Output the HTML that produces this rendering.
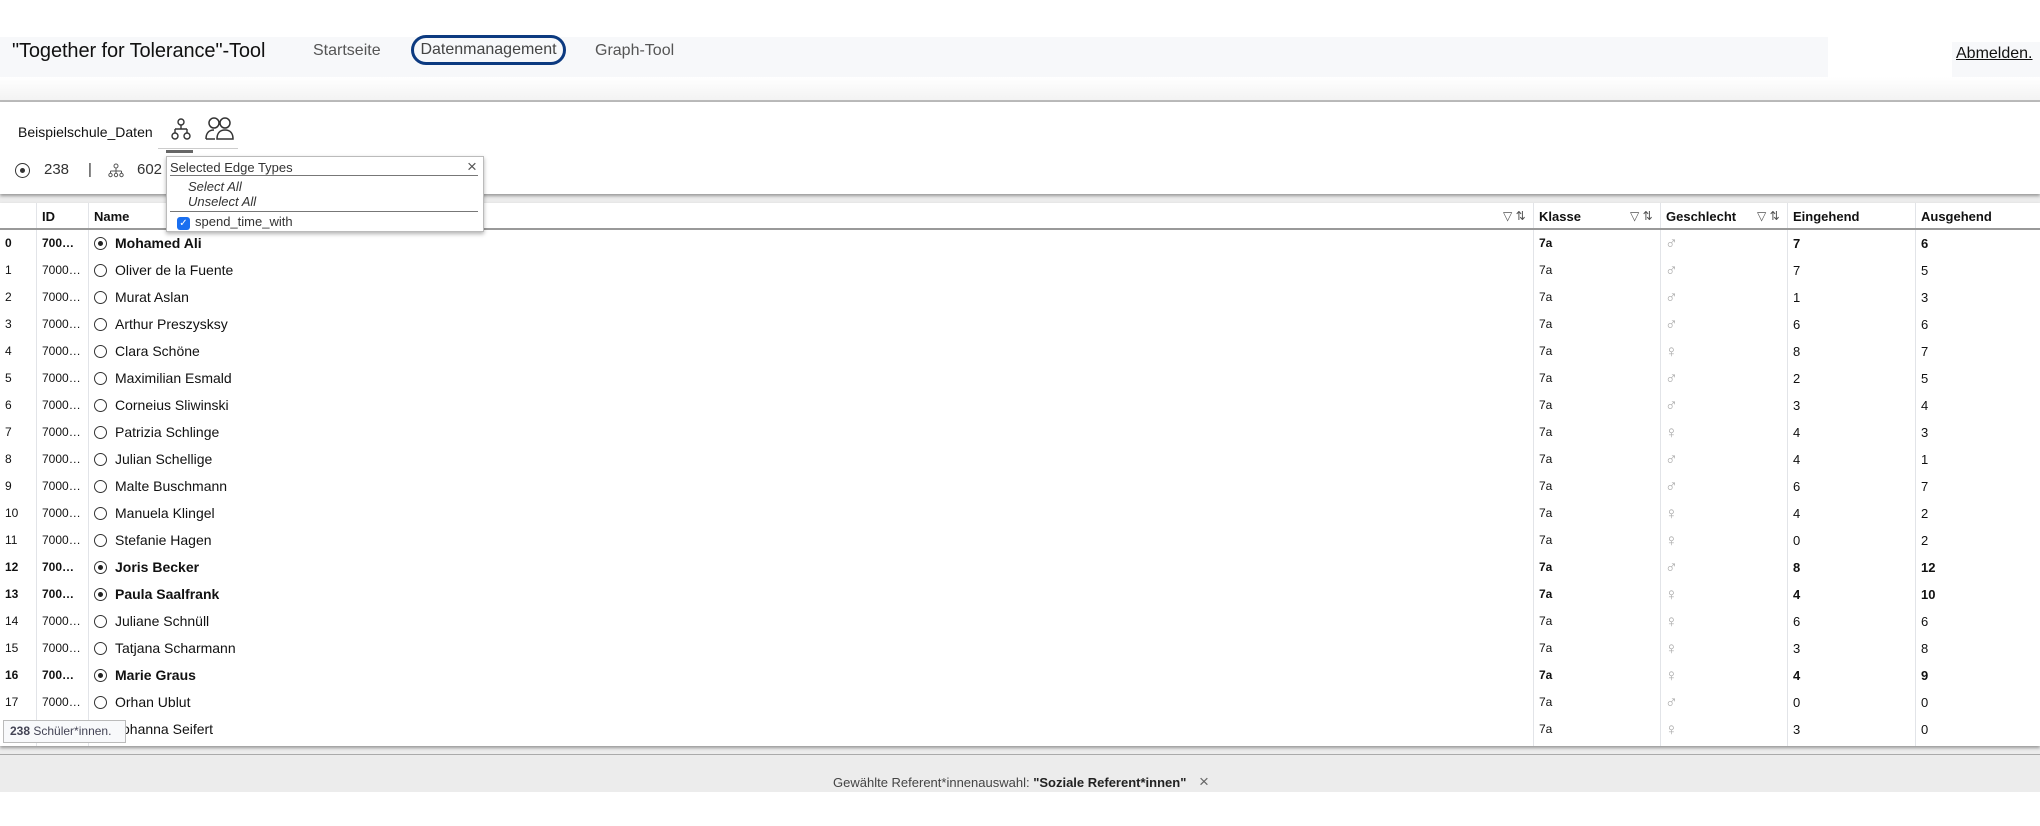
<!DOCTYPE html>
<html><head><meta charset="utf-8"><style>
*{margin:0;padding:0;box-sizing:border-box}
body{width:2040px;height:826px;overflow:hidden;background:#fff;font-family:"Liberation Sans",Arial,sans-serif;color:#111;position:relative}
.a{position:absolute;white-space:nowrap}
#nav{left:0;top:37px;width:1828px;height:40px;background:#f7f8fa}
#panel{left:0;top:100px;width:2040px;height:692px;background:#ececec;border-top:2px solid #bbb}
#card{left:0;top:102px;width:2040px;height:92px;background:#fff;box-shadow:0 2px 3px #999}
#tbl{left:0;top:203px;width:2040px;height:543px;background:#fff;box-shadow:0 2px 3px #999;overflow:hidden}
.row{position:absolute;left:0;width:2040px;height:27px;font-size:14px}
.row span{position:absolute;top:0;line-height:27px}
.vl{position:absolute;top:0;width:1px;height:543px;background:#e2e4e8}
.b{font-weight:bold}
.g{color:#aaa;font-size:17px}
.rad{position:absolute;top:7px;width:13px;height:13px;border:1.2px solid #333;border-radius:50%}
.rad.on::after{content:"";position:absolute;left:3px;top:3px;width:5px;height:5px;background:#222;border-radius:50%}
.ic{color:#555;font-weight:normal;font-size:12px}
</style></head><body>
<div class="a" id="nav"></div>
<div class="a" style="left:12px;top:38px;font-size:20px;line-height:26px;color:#111;letter-spacing:-0.1px">"Together for Tolerance"-Tool</div>
<div class="a" style="left:313px;top:41px;font-size:16px;line-height:20px;color:#555">Startseite</div>
<div class="a" style="left:411px;top:35px;width:155px;height:30px;border:3px solid #0c3a80;border-radius:15px;font-size:16px;line-height:24px;color:#444;text-align:center">Datenmanagement</div>
<div class="a" style="left:595px;top:41px;font-size:16px;line-height:20px;color:#555">Graph-Tool</div>
<div class="a" style="left:1952px;top:42px;width:88px;height:35px;background:#f7f8fa"></div>
<div class="a" style="left:1956px;top:44px;font-size:16px;line-height:20px;color:#111;text-decoration:underline">Abmelden.</div>
<div class="a" style="left:0;top:77px;width:2040px;height:23px;background:linear-gradient(#fff,#f3f3f3)"></div>
<div class="a" id="panel"></div>
<div class="a" id="card"></div>
<div class="a" style="left:18px;top:123px;font-size:14px;line-height:18px">Beispielschule_Daten</div>
<svg class="a" style="left:171px;top:118px" width="20" height="22" viewBox="0 0 20 22" fill="none" stroke="#333" stroke-width="1.4"><circle cx="10" cy="4" r="3"/><path d="M10 7v4M4 11h12M4 11v4M16 11v4"/><circle cx="4" cy="18" r="3"/><circle cx="16" cy="18" r="3"/></svg>
<svg class="a" style="left:204px;top:117px" width="30" height="24" viewBox="0 0 30 24" fill="none" stroke="#333" stroke-width="1.5"><circle cx="10" cy="6" r="5"/><circle cx="21" cy="6" r="5"/><path d="M2 22c0-6 3-9 8-9M13 22c0-6 3-9 8-9s8 3 8 9z"/><path d="M2 22h9"/></svg>
<div class="a" style="left:158px;top:148px;width:80px;height:1px;background:#ccc"></div>
<div class="a" style="left:166px;top:150px;width:27px;height:3px;background:#666"></div>
<div class="a" style="left:15px;top:163px;width:15px;height:15px;border:1.4px solid #333;border-radius:50%"></div>
<div class="a" style="left:20px;top:168px;width:5px;height:5px;background:#333;border-radius:50%"></div>
<div class="a" style="left:44px;top:161px;font-size:15px;line-height:18px;color:#333">238</div>
<div class="a" style="left:88px;top:161px;font-size:15px;line-height:18px;color:#333">|</div>
<svg class="a" style="left:108px;top:163px" width="16" height="15" viewBox="0 0 16 15" fill="none" stroke="#555" stroke-width="1"><circle cx="8" cy="3" r="2"/><path d="M8 5v3M2.5 8h11M2.5 8v2M8 8v2M13.5 8v2"/><circle cx="2.5" cy="12" r="1.7"/><circle cx="8" cy="12" r="1.7"/><circle cx="13.5" cy="12" r="1.7"/></svg>
<div class="a" style="left:137px;top:161px;font-size:15px;line-height:18px;color:#333">602</div>

<div class="a" id="tbl">
<div class="vl" style="left:36px"></div><div class="vl" style="left:88px"></div><div class="vl" style="left:1533px"></div><div class="vl" style="left:1660px"></div><div class="vl" style="left:1787px"></div><div class="vl" style="left:1915px"></div>
<div class="row" style="top:0;font-weight:bold;font-size:13px;border-bottom:2px solid #999;height:27px">
<span style="left:42px">ID</span><span style="left:94px">Name</span>
<span class="ic" style="left:1503px">&#9661; ⇅</span>
<span style="left:1539px">Klasse</span><span class="ic" style="left:1630px">&#9661; ⇅</span>
<span style="left:1666px">Geschlecht</span><span class="ic" style="left:1757px">&#9661; ⇅</span>
<span style="left:1793px">Eingehend</span><span style="left:1921px">Ausgehend</span></div>
</div>
<script>
var d=[["Mohamed Ali","m",7,6,1],["Oliver de la Fuente","m",7,5],["Murat Aslan","m",1,3],["Arthur Preszysksy","m",6,6],["Clara Schöne","f",8,7],["Maximilian Esmald","m",2,5],["Corneius Sliwinski","m",3,4],["Patrizia Schlinge","f",4,3],["Julian Schellige","m",4,1],["Malte Buschmann","m",6,7],["Manuela Klingel","f",4,2],["Stefanie Hagen","f",0,2],["Joris Becker","m",8,12,1],["Paula Saalfrank","f",4,10,1],["Juliane Schnüll","f",6,6],["Tatjana Scharmann","f",3,8],["Marie Graus","f",4,9,1],["Orhan Ublut","m",0,0],["Johanna Seifert","f",3,0]];
var h="";d.forEach(function(r,i){var b=r[4]?" b":"";h+='<div class="row'+b+'" style="top:'+(27+i*27)+'px">'+
'<span style="left:5px;font-size:12px">'+i+'</span><span style="left:42px;font-size:12px">'+(r[4]?'700…':'7000…')+'</span>'+
'<div class="rad'+(r[4]?' on':'')+'" style="left:94px"></div><span style="left:115px">'+r[0]+'</span>'+
'<span style="left:1539px;font-size:12px">7a</span><span class="g" style="left:1665px;font-weight:normal">'+(r[1]=="m"?"♂":"♀")+'</span>'+
'<span style="left:1793px;font-size:13px">'+r[2]+'</span><span style="left:1921px;font-size:13px">'+r[3]+'</span></div>'});
document.getElementById("tbl").insertAdjacentHTML("beforeend",h);
</script>

<div class="a" style="left:166px;top:156px;width:318px;height:76px;background:#fff;border:1px solid #bbb;box-shadow:0 2px 4px rgba(0,0,0,.3);font-size:13px;color:#333">
<div class="a" style="left:3px;top:3px">Selected Edge Types</div>
<div class="a" style="left:300px;top:0px;font-size:17px;color:#555">×</div>
<div class="a" style="left:3px;top:18px;width:308px;height:1px;background:#777"></div>
<div class="a" style="left:21px;top:22px;font-style:italic">Select All</div>
<div class="a" style="left:21px;top:37px;font-style:italic">Unselect All</div>
<div class="a" style="left:3px;top:54px;width:308px;height:1px;background:#777"></div>
<div class="a" style="left:10px;top:60px;width:13px;height:13px;background:#1a6ff0;border-radius:3px;color:#fff;font-size:10px;line-height:13px;text-align:center">✓</div>
<div class="a" style="left:28px;top:57px">spend_time_with</div>
</div>

<div class="a" style="left:3px;top:720px;width:123px;height:23px;background:#f8f9fb;border:1px solid #bbb;font-size:12px;line-height:21px;color:#445;padding-left:6px"><b>238</b> Schüler*innen.</div>
<div class="a" style="left:0;top:754px;width:2040px;height:1px;background:#aaa"></div>
<div class="a" style="left:833px;top:775px;font-size:13px;line-height:16px;color:#444">Gewählte Referent*innenauswahl: <b style="color:#222">"Soziale Referent*innen"</b></div>
<div class="a" style="left:1199px;top:772px;font-size:17px;line-height:20px;color:#666">×</div>
</body></html>
